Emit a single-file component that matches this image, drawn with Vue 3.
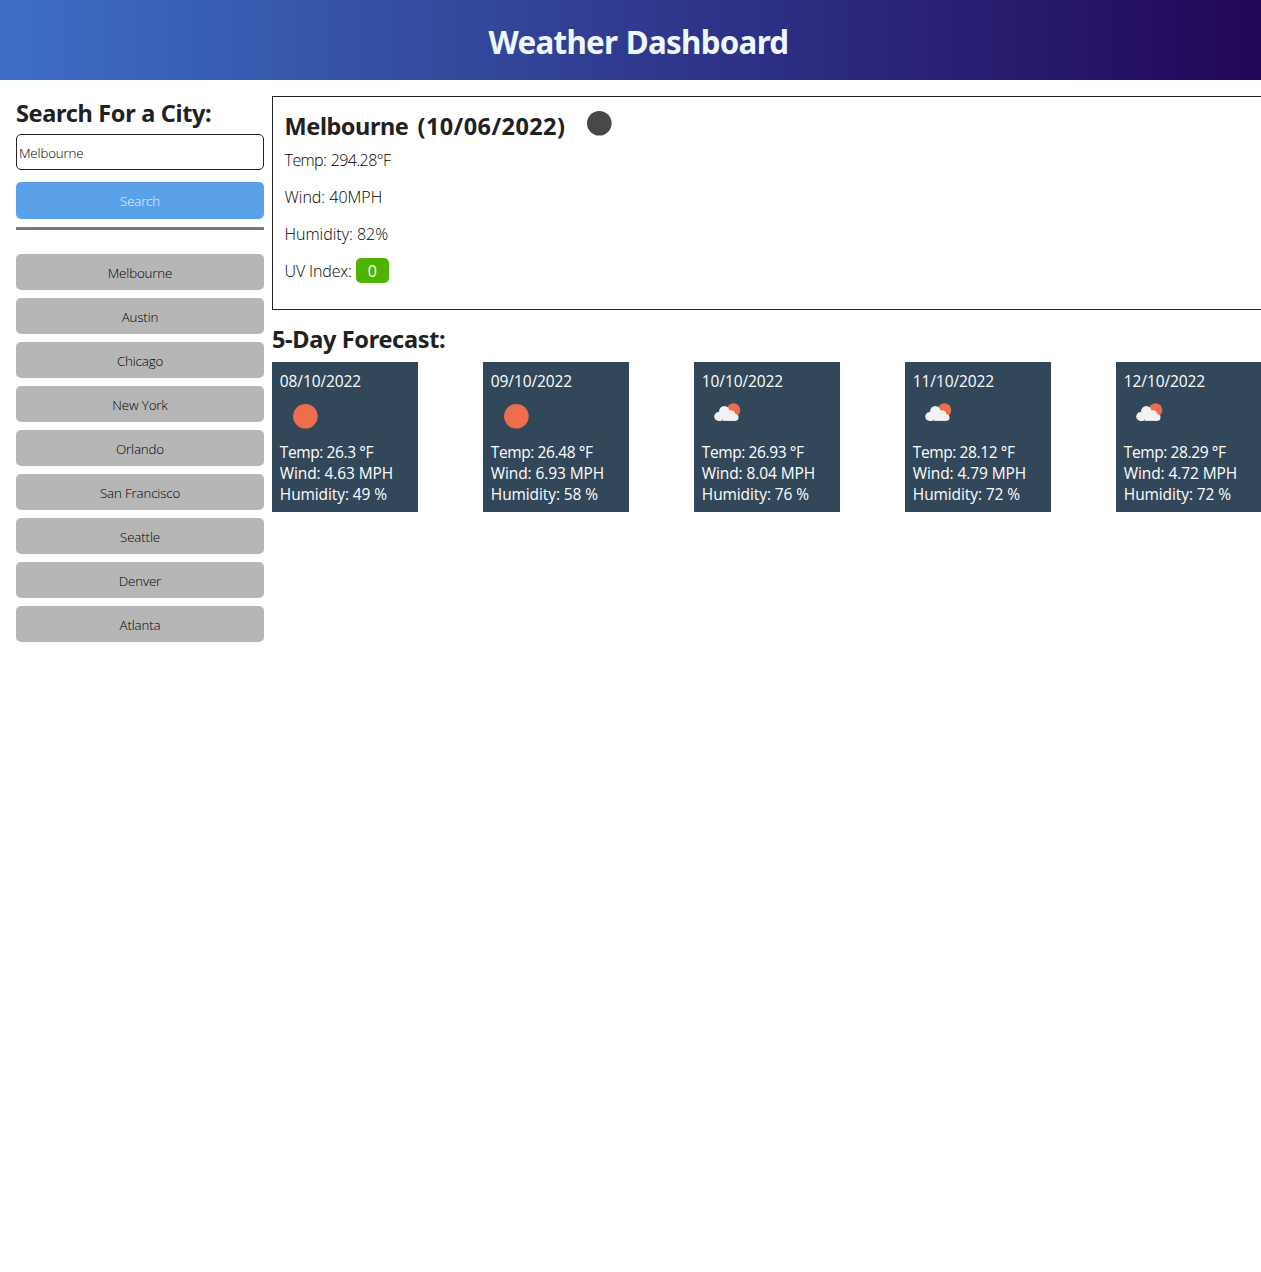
<script setup>
const cities = ['Melbourne', 'Austin', 'Chicago', 'New York', 'Orlando', 'San Francisco', 'Seattle', 'Denver', 'Atlanta']
const days = [
  { date: '08/10/2022', icon: 'sun', temp: '26.3', wind: '4.63', humidity: 49 },
  { date: '09/10/2022', icon: 'sun', temp: '26.48', wind: '6.93', humidity: 58 },
  { date: '10/10/2022', icon: 'rain', temp: '26.93', wind: '8.04', humidity: 76 },
  { date: '11/10/2022', icon: 'rain', temp: '28.12', wind: '4.79', humidity: 72 },
  { date: '12/10/2022', icon: 'rain', temp: '28.29', wind: '4.72', humidity: 72 },
]
</script>

<template>
  <div class="viewport">
    <div class="page">
      <header class="header"><h1>Weather Dashboard</h1></header>
      <div class="content">
        <aside class="sidebar">
          <h2 class="search-title">Search For a City:</h2>
          <input class="field" type="text" value="Melbourne" />
          <button class="btn search">Search</button>
          <div class="rule"></div>
          <button v-for="c in cities" :key="c" class="btn city">{{ c }}</button>
        </aside>
        <main class="main">
          <section class="current">
            <div class="current-head">
              <h2 class="city-title">Melbourne <span class="date">(10/06/2022)</span></h2>
              <svg class="moon" width="50" height="50" viewBox="0 0 50 50"><circle cx="25.3" cy="25.3" r="12.3" fill="#48484a" /></svg>
            </div>
            <p class="temp">Temp: 294.28°F</p>
            <p>Wind: 40MPH</p>
            <p>Humidity: 82%</p>
            <p class="uv-line">UV Index: <span class="uv">0</span></p>
          </section>
          <h2 class="forecast-title">5-Day Forecast:</h2>
          <section class="forecast">
            <article v-for="d in days" :key="d.date" class="card">
              <div class="line">{{ d.date }}</div>
              <svg class="icon" width="50" height="50" viewBox="0 0 50 50">
                <circle v-if="d.icon === 'sun'" cx="25.4" cy="24.3" r="12.3" fill="#ec6e4c" />
                <template v-else>
                  <circle cx="31.5" cy="18.1" r="6.8" fill="#ec6e4c" />
                  <g fill="#f2f2f2">
                    <circle cx="16.6" cy="24.5" r="4.4" />
                    <circle cx="22.3" cy="19.2" r="5.2" />
                    <circle cx="28.9" cy="22.6" r="4.4" />
                    <circle cx="33.2" cy="25.6" r="3.3" />
                    <rect x="16.6" y="21" width="16.6" height="7.9" />
                  </g>
                  <path d="M20.8 27.6l-1.6 2.8M24.3 31.5l-1.7 3M27.8 31.5l-1.4 2.4" stroke="#3b434c" stroke-width=".8" fill="none" />
                </template>
              </svg>
              <div class="line temp">Temp: {{ d.temp }} °F</div>
              <div class="line">Wind: {{ d.wind }} MPH</div>
              <div class="line">Humidity: {{ d.humidity }} %</div>
            </article>
          </section>
        </main>
      </div>
    </div>
  </div>
</template>

<style>
body { margin: 0; background: #fff; }
</style>

<style scoped>
* { box-sizing: border-box; }
.viewport { width: 100%; height: 1272px; overflow: hidden; font-family: "Open Sans", "Noto Sans", sans-serif; color: #212121; }
.page { width: 1277px; }
h1, h2, p { margin: 0; }
h1, h2 { font-family: "Noto Sans", sans-serif; font-weight: 700; white-space: nowrap; }
.header { height: 80px; display: flex; align-items: center; justify-content: center; padding-top: 3px; background: linear-gradient(90deg, #3d6fc5 0%, #220557 100%); }
h1 { color: #f0f8ff; font-size: 31.3px; line-height: 44px; letter-spacing: -.7px; word-spacing: 1px; }
.content { display: flex; gap: 8px; padding: 16px 0 0 16px; }
.sidebar { width: 248px; flex: none; display: flex; flex-direction: column; }
h2 { font-size: 23.5px; line-height: 32px; letter-spacing: -.33px; }
.search-title { height: 38px; padding-top: 1px; }
.field { width: 100%; height: 36px; padding: 2px 2px 1px; border: 1px solid #212121; border-radius: 5px; background: #fff; color: #000; }
.btn { width: 100%; height: 36px; border: 0; border-radius: 5px; padding: 2px 0 0; color: #000; background: #b6b6b6; }
.field, .btn { font: 350 13.33px "Open Sans", sans-serif; letter-spacing: -.15px; }
.search { height: 37px; padding-top: 1px; margin-top: 12px; background: #5aa1e9; color: #e6f2fd; letter-spacing: -.2px; }
.rule { height: 3px; margin: 8px 0 24px; background: #777; }
.city { margin-bottom: 8px; }
.main { flex: 1; min-width: 0; }
.current { width: 1005px; height: 214px; border: 1px solid #212121; padding: 1px 12px 0 11.6px; }
.current-head { display: flex; height: 50px; }
.city-title { padding-top: 12px; width: 289px; letter-spacing: -.45px; word-spacing: 3.5px; }
.date { letter-spacing: .4px; }
.current p { color: #000; font-size: 16px; line-height: 21px; font-weight: 350; height: 37px; padding-top: 2px; letter-spacing: -.02px; white-space: nowrap; }
.current p.temp { letter-spacing: -.6px; word-spacing: 1px; }
.current p.uv-line { letter-spacing: -.14px; }
.uv { display: inline-block; height: 25px; line-height: 26px; padding: 0 12px; margin: -3px 0; border-radius: 5px; background: #4eb400; color: #fff; font-weight: 400; letter-spacing: 0; }
.forecast-title { margin-top: 13px; height: 39px; }
.forecast { display: flex; gap: 65px; }
.card { width: 146px; height: 150px; flex: none; padding: 9px 8px 0 7.8px; background: #33475a; color: #fff; font-size: 15.5px; line-height: 21px; letter-spacing: -.1px; white-space: nowrap; }
.card .temp { letter-spacing: -.4px; }
.icon { display: block; }
</style>
